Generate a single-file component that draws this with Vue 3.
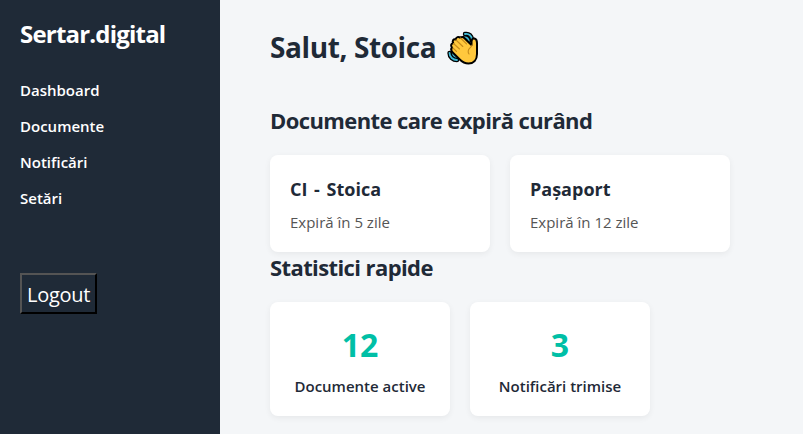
<script setup>
const links = ['Dashboard', 'Documente', 'Notificări', 'Setări']
const documents = [
  { name: 'CI - Stoica', info: 'Expiră în 5 zile' },
  { name: 'Pașaport', info: 'Expiră în 12 zile' },
]
const stats = [
  { value: 12, label: 'Documente active' },
  { value: 3, label: 'Notificări trimise' },
]
</script>

<template>
  <div class="layout">
    <aside class="sidebar">
      <h2 class="brand">Sertar.digital</h2>
      <nav class="nav">
        <a v-for="link in links" :key="link" class="link">{{ link }}</a>
      </nav>
      <button class="logout">Logout</button>
    </aside>
    <main class="content">
      <h1 class="greeting">
        <span>Salut, Stoica</span>
        <svg class="wave" viewBox="0 0 32 34" fill="none" stroke-linecap="round" stroke-linejoin="round">
          <path d="M18 3c4-.8 7 2 7 6M17.500 6.500c2.300-.3 4 1.200 4.300 3.500M2.500 22c0 4 3.500 7 7.500 7M6 22c0 2 1.700 3.700 4 4" stroke="#000" stroke-width="4.400" />
          <path d="M18 3c4-.8 7 2 7 6M17.500 6.500c2.300-.3 4 1.200 4.300 3.500M2.500 22c0 4 3.500 7 7.500 7M6 22c0 2 1.700 3.700 4 4" stroke="#40bcd8" stroke-width="1.800" />
          <path d="M5 16.500C3 14.500 4.500 12 6.300 12.200 4.800 9.800 6.500 7.800 8.700 8.500 9 6 11.500 5.300 13.300 6.800c1.500-1.300 3-.8 4 .2L24.500 14v-3c0-3 1.500-4 3-3.500C29.500 8 30 9.500 30 12v11c0 6-3.500 9.500-8.500 9.500-4 0-6.500-1.800-9-4.300l-7-7c-1.600-1.600-1.500-3.500-.5-4.700z" fill="#ffc83d" stroke="#000" stroke-width="2" />
          <path d="M6.500 12.500l6 5.500M9 9l6.800 6.500M13.500 7l6 5.800M6 17l3.500 3.300M25 14c-.2 2.500-3.500 3-3.800 6-.1 1.300.2 2.300.8 3" stroke="#c58b1c" stroke-width="1.100" />
        </svg>
      </h1>
      <section>
        <h2 class="heading">Documente care expiră curând</h2>
        <div class="cards">
          <article v-for="doc in documents" :key="doc.name" class="card">
            <h3 class="name">{{ doc.name }}</h3>
            <p class="info">{{ doc.info }}</p>
          </article>
        </div>
      </section>
      <section>
        <h2 class="heading second">Statistici rapide</h2>
        <div class="cards">
          <article v-for="stat in stats" :key="stat.label" class="card stat">
            <div class="value">{{ stat.value }}</div>
            <div class="label">{{ stat.label }}</div>
          </article>
        </div>
      </section>
    </main>
  </div>
</template>

<style>
body { margin: 0; background: #f4f6f8; overflow: hidden; }
</style>

<style scoped>
.layout { display: flex; height: 434px; overflow: hidden; font-family: 'Segoe UI', 'Open Sans', sans-serif; color: #1f2a37; background: #f4f6f8; }
h1, h2, h3, p { margin: 0; }
.sidebar { box-sizing: border-box; flex: none; width: 220px; padding: 18px 20px; background: #1f2a37; color: #fff; }
.brand { font-size: 24px; line-height: 32px; font-weight: 700; letter-spacing: -0.8px; white-space: nowrap; }
.nav { display: flex; flex-direction: column; gap: 15px; margin-top: 30px; }
.link { font-size: 15px; line-height: 21px; font-weight: 600; }
.logout { display: block; box-sizing: border-box; width: 77px; height: 41px; margin-top: 64px; padding: 2px 0 0; border: 2px outset #000; background: #1f2a37; color: #fff; font: 400 20px/34px 'Segoe UI', 'Open Sans', sans-serif; letter-spacing: -0.3px; }
.content { flex: 1; padding: 27px 50px 0; }
.greeting { display: flex; gap: 11px; font-size: 28px; line-height: 40px; font-weight: 700; letter-spacing: -0.4px; white-space: nowrap; }
.wave { width: 32px; height: 34px; margin-top: 4px; }
.heading { margin-top: 38px; font-size: 22px; line-height: 30px; font-weight: 700; letter-spacing: -0.6px; white-space: nowrap; }
.second { margin-top: 0; }
.cards { display: flex; gap: 20px; margin-top: 20px; }
.card { box-sizing: border-box; width: 220px; height: 97px; padding: 21px 20px; border-radius: 8px; background: #fff; box-shadow: 0 2px 6px rgba(0, 0, 0, 0.06); }
.name { font-size: 18px; line-height: 26px; font-weight: 700; word-spacing: 2px; }
.info { margin-top: 9px; font-size: 15px; line-height: 22px; color: #555; }
.stat { width: 180px; height: 114px; padding: 21px 0; text-align: center; white-space: nowrap; }
.value { font-size: 32px; line-height: 44px; font-weight: 700; color: #00bfa6; }
.label { margin-top: 8px; font-size: 15px; line-height: 22px; font-weight: 600; }
</style>
